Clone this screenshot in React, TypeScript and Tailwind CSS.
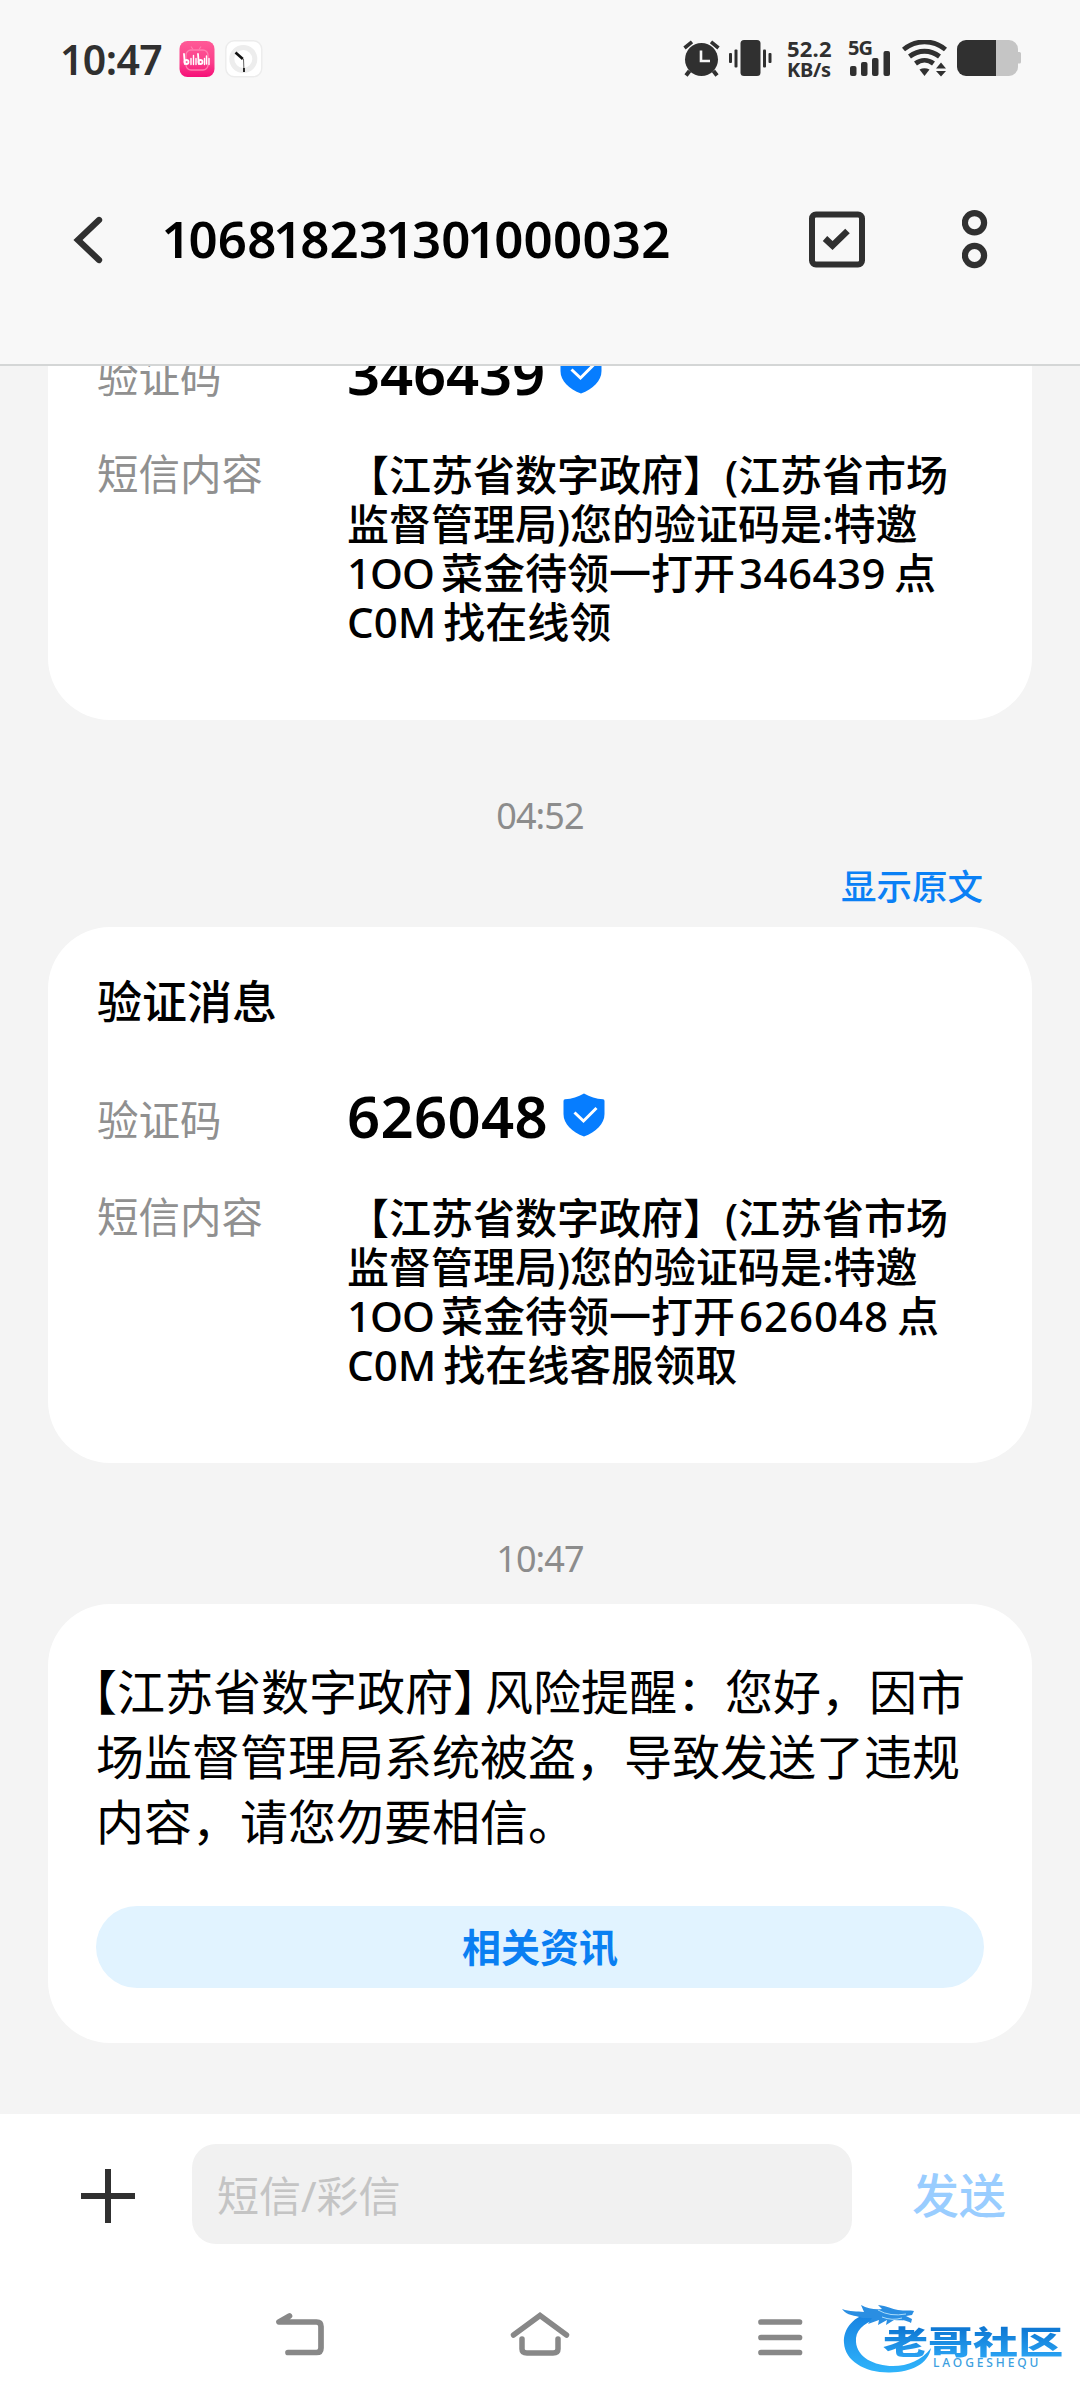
import React from 'react';

function StatusBar() {
  return (
    <div className="flex h-[116px] items-start justify-between pl-[60px] pr-[59px] pt-[40px] text-[#303030]">
      <div className="flex items-center">
        <span className="w-[119px] text-[41px] font-semibold leading-[36px] tracking-[-0.600px]">10:47</span>
        <svg width="36" height="36" viewBox="0 0 36 36">
          <defs>
            <linearGradient id="bili" x1="0" y1="0" x2="0" y2="1">
              <stop offset="0" stopColor="#ff5a96" />
              <stop offset="0.6" stopColor="#fb3f8b" />
              <stop offset="1" stopColor="#f60f78" />
            </linearGradient>
          </defs>
          <rect x="0.500" y="0" width="35" height="36" rx="8" fill="url(#bili)" />
          <rect x="7" y="9" width="22" height="20" rx="5" fill="none" stroke="#ff7dae" strokeWidth="1.3" />
          <path d="M12 5.500l2 3M22 5.500l-2 3" stroke="#ff7dae" strokeWidth="1.2" />
          <g fill="none" stroke="#fff" strokeWidth="1.8" strokeLinecap="round">
            <path d="M5 13l.8 10M19 13l.8 10" />
            <circle cx="7.500" cy="21" r="2" />
            <circle cx="21.500" cy="21" r="2" />
            <path d="M12 17.500v6M14.500 14.500v9M17 17.500v6M25.500 17.500v6M27.500 15v8M30 17.500v6" strokeWidth="1.4" />
          </g>
        </svg>
        <svg className="ml-[10px]" width="38" height="38" viewBox="0 0 38 38">
          <rect x="0.800" y="0.800" width="36" height="36" rx="8.500" fill="#fff" stroke="#ececec" strokeWidth="1.400" />
          <circle cx="18.300" cy="19" r="11.500" fill="none" stroke="#ededed" strokeWidth="5" />
          <path d="M10.500 12.500L17.800 19" stroke="#111" strokeWidth="2.600" />
          <path d="M18.500 19L19 32" stroke="#555" strokeWidth="0.900" />
          <path d="M19 28V32" stroke="#111" strokeWidth="1.700" />
        </svg>
      </div>
      <div className="flex items-start">
        <svg width="38" height="37" viewBox="0 0 38 37">
          <circle cx="18.500" cy="19.500" r="16.500" fill="#303030" />
          <path d="M1.500 8L9 1.800M35.500 8L28 1.800" stroke="#303030" strokeWidth="3.600" />
          <path d="M6.500 31l-3.500 4.500M30.500 31l3.500 4.500" stroke="#303030" strokeWidth="4" />
          <path d="M18 10.500V21H27" fill="none" stroke="#f7f7f7" strokeWidth="2.600" />
        </svg>
        <svg className="ml-[8px]" width="43" height="37" viewBox="0 0 43 37">
          <g fill="#303030">
            <rect x="11.500" y="0" width="20" height="36" rx="3.500" />
            <rect x="0" y="13" width="3" height="10" rx="1" />
            <rect x="5.500" y="9.500" width="3" height="18" rx="1" />
            <rect x="34" y="9.500" width="3" height="18" rx="1" />
            <rect x="39.500" y="13" width="3" height="10" rx="1" />
          </g>
        </svg>
        <div className="ml-[15px] w-[60px] whitespace-nowrap font-bold">
          <div className="h-[20px] text-[22px] leading-[17px] tracking-[0.200px]">52.2</div>
          <div className="text-[20px] leading-[19px] tracking-[-0.300px]">KB/s</div>
        </div>
        <div className="ml-[1px] w-[54px]">
          <div className="h-[11px] text-[20px] font-bold leading-[16px] tracking-[-1px]">5G</div>
          <svg className="ml-[2px]" width="42" height="26" viewBox="0 0 42 26">
            <g fill="#303030">
              <rect x="0" y="15" width="6.500" height="10" rx="2" />
              <rect x="11" y="11" width="6.500" height="14" rx="2" />
              <rect x="22" y="7" width="6.500" height="18" rx="2" />
              <rect x="33.500" y="0" width="6.500" height="25" rx="2" />
            </g>
          </svg>
        </div>
        <svg width="46" height="37" viewBox="0 0 46 37">
          <g fill="none" stroke="#303030" strokeWidth="4.800">
            <path d="M1.500 9.500C14 -0.700 31 -0.700 43.500 9.500" />
            <path d="M7.500 16.500C16.500 9.500 28.500 9.500 37.500 16.500" />
            <path d="M13.500 23.500C19 19.300 26 19.300 31.500 23.500" />
          </g>
          <path d="M17.500 29.500q5-2.600 10 0L22.500 36z" fill="#303030" />
          <path d="M34 28.500L39 22.500L44 28.500zM34 31L39 36.500L44 31z" fill="#303030" />
        </svg>
        <svg className="ml-[9px]" width="64" height="37" viewBox="0 0 64 37">
          <path d="M39 0H52a9 9 0 0 1 9 9V12h1.500q1.500 0 1.500 1.500V22q0 1.500-1.500 1.500H61V27a9 9 0 0 1-9 9H39z" fill="#c5c5c5" />
          <path d="M39 0H9a9 9 0 0 0-9 9V27a9 9 0 0 0 9 9H39z" fill="#303030" />
        </svg>
      </div>
    </div>
  );
}

// The digit 1 is set tighter than its neighbours.
function One() {
  return <span className="-ml-[3.500px] mr-[-2.500px]">1</span>;
}

function Header() {
  return (
    <header className="h-[366px] border-b-2 border-[#d4d6d6] bg-[#f8f8f8]">
      <StatusBar />
      <div className="flex h-[248px] items-start pl-[72px] pt-[94px]">
        <svg className="mt-[6px]" width="32" height="48" viewBox="0 0 32 48">
          <path d="M27 4L6 24L27 44" fill="none" stroke="#303030" strokeWidth="6.300" strokeLinecap="round" />
        </svg>
        <h1 className="ml-[61px] w-[644px] whitespace-nowrap text-[51px] font-semibold leading-[57px] tracking-[0.250px] text-black">
          <One />068<One />823<One />30<One />000032
        </h1>
        <svg width="56" height="58" viewBox="0 0 56 58">
          <rect x="3" y="4.500" width="50" height="50" rx="4" fill="none" stroke="#303030" strokeWidth="6" />
          <path d="M16 28.500L23.500 35.500L38.500 21" fill="none" stroke="#303030" strokeWidth="6.500" />
        </svg>
        <svg className="ml-[97px]" width="26" height="60" viewBox="0 0 26 60">
          <circle cx="12.500" cy="12.700" r="9.600" fill="none" stroke="#303030" strokeWidth="6.200" />
          <circle cx="12.500" cy="45.500" r="9.600" fill="none" stroke="#303030" strokeWidth="6.200" />
        </svg>
      </div>
    </header>
  );
}

function Shield() {
  return (
    <svg width="42" height="44" viewBox="0 0 42 44">
      <path
        d="M21 0.500C27 4 33 5.800 40 6.300Q41.500 6.500 41.500 8V21C41.500 31 33 39 21 43.500C9 39 0.500 31 0.500 21V8Q0.500 6.500 2 6.300C9 5.800 15 4 21 0.500Z"
        fill="#067dff"
      />
      <path d="M11.500 19.500L20.500 28L33.500 15" fill="none" stroke="#fff" strokeWidth="3" />
    </svg>
  );
}

function CodeCard({ code, tail, narrow = false }: { code: string; tail: string; narrow?: boolean }) {
  return (
    <section className="h-[536px] rounded-[62px] bg-white pl-[49px] pt-[45px]">
      <h2 className="text-[45px] font-medium leading-[60px] text-black">验证消息</h2>
      <div className="mt-[50px] flex h-[66px] items-center">
        <span className="mt-[10px] w-[250px] text-[41.500px] leading-[60px] text-[#909090]">验证码</span>
        <span
          className={
            narrow
              ? 'mt-[2px] w-[213px] text-[58px] font-semibold leading-[60px] tracking-[-0.200px] text-black'
              : 'mt-[1px] w-[216px] text-[58px] font-semibold leading-[60px] tracking-[0.300px] text-black'
          }
        >
          {code}
        </span>
        <Shield />
      </div>
      <div className="mt-[45px] flex">
        <span className="w-[250px] text-[41.500px] leading-[49px] text-[#909090]">短信内容</span>
        <div className="whitespace-nowrap text-[42px] font-medium leading-[49px] text-black">
          <div>【江苏省数字政府】(江苏省市场</div>
          <div>监督管理局)您的验证码是:特邀</div>
          <div>
            <span className="mr-[7px] tracking-[-1px]">1OO</span>菜金待领一打开
            <span className={narrow ? 'ml-[4px] mr-[8px] tracking-[0.500px]' : 'ml-[4px] mr-[8px] tracking-[1px]'}>{code}</span>点
          </div>
          <div>
            <span className="mr-[7px]">C0M</span>
            {tail}
          </div>
        </div>
      </div>
    </section>
  );
}

function Time({ children }: { children: React.ReactNode }) {
  return <div className="text-center text-[36px] leading-[40px] tracking-[-0.900px] text-[#8c8c8c]">{children}</div>;
}

function Watermark() {
  return (
    <div className="absolute bottom-[20px] left-[840px] h-[82px] w-[232px]">
      <svg className="absolute left-0 top-0" width="100" height="82" viewBox="0 0 100 82">
        <defs>
          <linearGradient id="dragon" x1="0" y1="0" x2="0" y2="1">
            <stop offset="0" stopColor="#1680e0" />
            <stop offset="1" stopColor="#2fb4fb" />
          </linearGradient>
        </defs>
        <path
          d="M32 14C14 18 3 30 4 45C5 63 25 75 50 74.500C72 74 88 66 91 50C82 62 68 68 53 68C34 68 17 59 16 44C15 33 23 25 37 21Z"
          fill="url(#dragon)"
        />
        <path
          d="M2 11C10 14 17 13 24 14L21 7C28 11 36 12 42 11L38 7C47 8 52 11 58 12C65 13 70 12 74 13L72 17L66 18L72 21L71 25C64 21 60 23 54 22L46 27L47 22L38 27L39 22L28 26L32 20L22 20C15 17 7 18 2 11Z"
          fill="#2a8ee2"
        />
        <path d="M38 12q12 7 28 4M42 19q10 4 20 1" stroke="#a9dcfa" strokeWidth="1" fill="none" />
      </svg>
      <div className="absolute left-[43px] top-[27px] origin-left scale-x-[1.430] whitespace-nowrap bg-linear-to-b from-[#0b73d0] to-[#2ba5f4] bg-clip-text text-[31.500px] font-black leading-[34px] text-transparent">
        老哥社区
      </div>
      <div className="absolute left-[93px] top-[58px] text-[12px] font-medium leading-[14px] tracking-[2.900px] text-[#3d9fe0]">
        LAOGESHEQU
      </div>
    </div>
  );
}

export default function App() {
  return (
    <div className="flex h-[2400px] w-[1080px] flex-col overflow-hidden bg-[#f4f4f4] font-['Noto_Sans','Noto_Sans_CJK_SC',sans-serif]" lang="zh-CN">
      <Header />
      <main className="h-[1748px] overflow-hidden px-[48px]">
        <div className="mt-[-182px]">
          <CodeCard code="346439" tail="找在线领" narrow />
        </div>
        <div className="mt-[76px]">
          <Time>04:52</Time>
        </div>
        <div className="mr-[49px] mt-[30px] text-right text-[35.500px] font-medium leading-[40px] text-[#0a80f5]">显示原文</div>
        <div className="mt-[21px]">
          <CodeCard code="626048" tail="找在线客服领取" />
        </div>
        <div className="mt-[76px]">
          <Time>10:47</Time>
        </div>
        <section className="mt-[25px] h-[439px] rounded-[62px] bg-white px-[48px] pt-[55px]">
          <div className="whitespace-nowrap text-[48px] leading-[65px] text-black">
            <div>
              <span className="ml-[-3px] [font-feature-settings:'halt']">【</span>江苏省数字政府
              <span className="mr-[8px] [font-feature-settings:'halt']">】</span>风险提醒：您好，因市
            </div>
            <div>场监督管理局系统被盗，导致发送了违规</div>
            <div>内容，请您勿要相信。</div>
          </div>
          <button className="mt-[52px] block h-[82px] w-[888px] rounded-full bg-[#e1f3ff] text-[39px] font-bold leading-[82px] text-[#0a7ff2]">
            相关资讯
          </button>
        </section>
      </main>
      <footer className="relative h-[286px] bg-white">
        <div className="flex items-center pl-[80px] pt-[30px]">
          <svg className="mt-[4px]" width="56" height="56" viewBox="0 0 56 56">
            <path d="M28 1V55M1 28H55" stroke="#303030" strokeWidth="6" />
          </svg>
          <div className="ml-[56px] h-[100px] w-[660px] rounded-[24px] bg-[#f1f1f1] pl-[25px] text-[42px] leading-[104px] text-[#c4c4c4]">
            短信/彩信
          </div>
          <span className="ml-[60px] mt-[2px] text-[47px] font-medium leading-[98px] text-[#99cdff]">发送</span>
        </div>
        <div className="mt-[67px] flex items-start pl-[274px]">
          <svg width="52" height="46" viewBox="0 0 52 46">
            <path d="M5 10L15 4.500V10Z" fill="#888" />
            <path d="M15.500 5L5 11H42.500Q47 11 47 15.500V37Q47 41.500 42.500 41.500H14" fill="none" stroke="#888" strokeWidth="5.700" strokeLinecap="round" strokeLinejoin="round" />
          </svg>
          <svg className="ml-[184px]" width="60" height="46" viewBox="0 0 60 46">
            <path d="M3.500 24L30 4.500L56.500 24" fill="none" stroke="#888" strokeWidth="5.500" strokeLinecap="round" />
            <path d="M12 28V38Q12 42 17 42H43Q48 42 48 38V28" fill="none" stroke="#888" strokeWidth="5.500" strokeLinecap="round" />
          </svg>
          <svg className="ml-[188px]" width="46" height="46" viewBox="0 0 46 46">
            <path d="M3 11H41.500M3 26.500H41.500M3 41.500H41.500" stroke="#888" strokeWidth="5.700" strokeLinecap="round" />
          </svg>
        </div>
        <Watermark />
      </footer>
    </div>
  );
}
